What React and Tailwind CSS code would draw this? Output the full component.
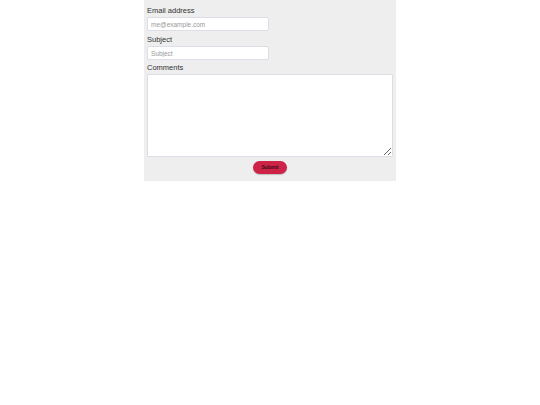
export default function App() {
  return (
    <div className="min-h-screen bg-white" style={{ fontFamily: '"Liberation Sans", Arial, sans-serif' }}>
      <form className="mx-auto w-[252px] bg-[#eeeeee] px-[3px] pt-[6px] pb-[7px] text-[#333]">
        <label className="block text-[7.5px] leading-[10px]">Email address</label>
        <input
          type="email"
          placeholder="me@example.com"
          className="mt-[1px] block h-[14px] w-[122px] rounded-[2px] border border-[#dddde6] bg-white px-[3px] text-[6.5px] placeholder:text-[#999]"
        />
        <label className="mt-[4px] block text-[7.5px] leading-[10px]">Subject</label>
        <input
          type="text"
          placeholder="Subject"
          className="mt-[1px] block h-[14px] w-[122px] rounded-[2px] border border-[#dddde6] bg-white px-[3px] text-[6.5px] placeholder:text-[#999]"
        />
        <label className="mt-[3px] block text-[7.5px] leading-[10px]">Comments</label>
        <textarea className="mt-[1px] block h-[83px] w-[246px] rounded-[1px] border border-[#dddde6] bg-white" />
        <div className="mt-[4px] flex justify-center">
          <button
            type="submit"
            className="h-[13px] w-[34px] rounded-full bg-[#cc2347] text-[5px] font-bold text-[#3a0a14] shadow-[0_1px_1px_rgba(0,0,0,0.2)]"
          >
            Submit
          </button>
        </div>
      </form>
    </div>
  );
}
